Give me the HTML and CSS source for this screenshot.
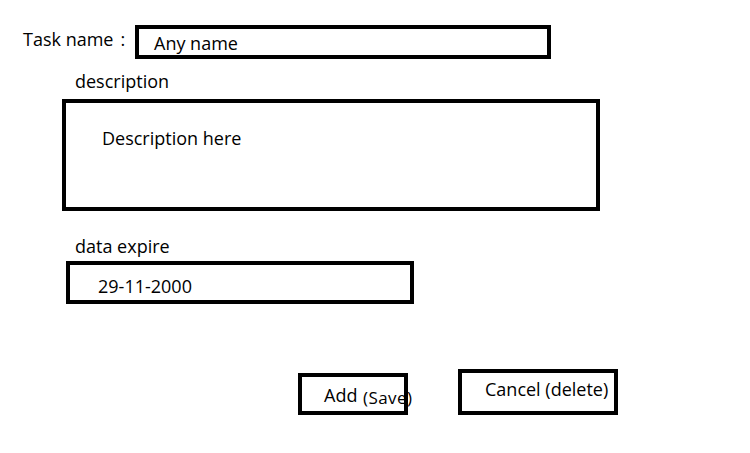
FILE: index.html
```html
<!DOCTYPE html>
<html>
<head>
<meta charset="utf-8">
<link rel="stylesheet" href="styles.css">
</head>
<body>
<div class="sketch">
  <div class="name-row">
    <span class="label name-label">Task name<span class="colon">:</span></span>
    <div class="box name-box">Any name</div>
  </div>
  <div class="label desc-label">description</div>
  <div class="box desc-box">Description here</div>
  <div class="label date-label">data expire</div>
  <div class="box date-box">29-11-2000</div>
  <div class="actions">
    <div class="box btn add-btn">Add <span class="save">(Save)</span></div>
    <div class="box btn cancel-btn">Cancel (delete)</div>
  </div>
</div>
</body>
</html>
```
FILE: styles.css
```css
html, body {
  margin: 0;
  background: #fff;
}
body {
  font-family: "Open Sans", "Noto Sans", sans-serif;
  font-size: 18px;
  line-height: 24px;
  color: #000;
  width: 750px;
  height: 453px;
  overflow: hidden;
}
.sketch {
  display: flex;
  flex-direction: column;
  align-items: flex-start;
}
.box {
  box-sizing: border-box;
  border: 4px solid #000;
  white-space: nowrap;
}
.name-row {
  display: flex;
  align-items: flex-start;
  padding-top: 25px;
}
.name-label {
  margin-left: 23px;
  width: 112px;
  margin-top: 2px;
  white-space: nowrap;
}
.colon {
  margin-left: 7px;
}
.name-box {
  width: 416px;
  height: 34px;
  padding-left: 15px;
  padding-top: 2px;
}
.desc-label {
  margin-top: 10px;
  margin-left: 75px;
}
.desc-box {
  margin-top: 6px;
  margin-left: 62px;
  width: 538px;
  height: 112px;
  padding: 23px 0 0 36px;
}
.date-label {
  margin-top: 23px;
  margin-left: 75px;
}
.date-box {
  margin-top: 3px;
  margin-left: 66px;
  width: 348px;
  height: 43px;
  padding: 9px 0 0 28px;
}
.actions {
  display: flex;
  align-items: flex-start;
  margin-top: 65px;
  margin-left: 298px;
}
.add-btn {
  margin-top: 4px;
  width: 110px;
  height: 42px;
  padding: 6px 0 0 22px;
  overflow: visible;
}
.save {
  font-size: 17px;
  letter-spacing: 0.4px;
  position: relative;
  top: 2px;
  margin-left: 1px;
}
.cancel-btn {
  margin-left: 50px;
  width: 160px;
  height: 46px;
  padding: 4px 0 0 23px;
}
```
